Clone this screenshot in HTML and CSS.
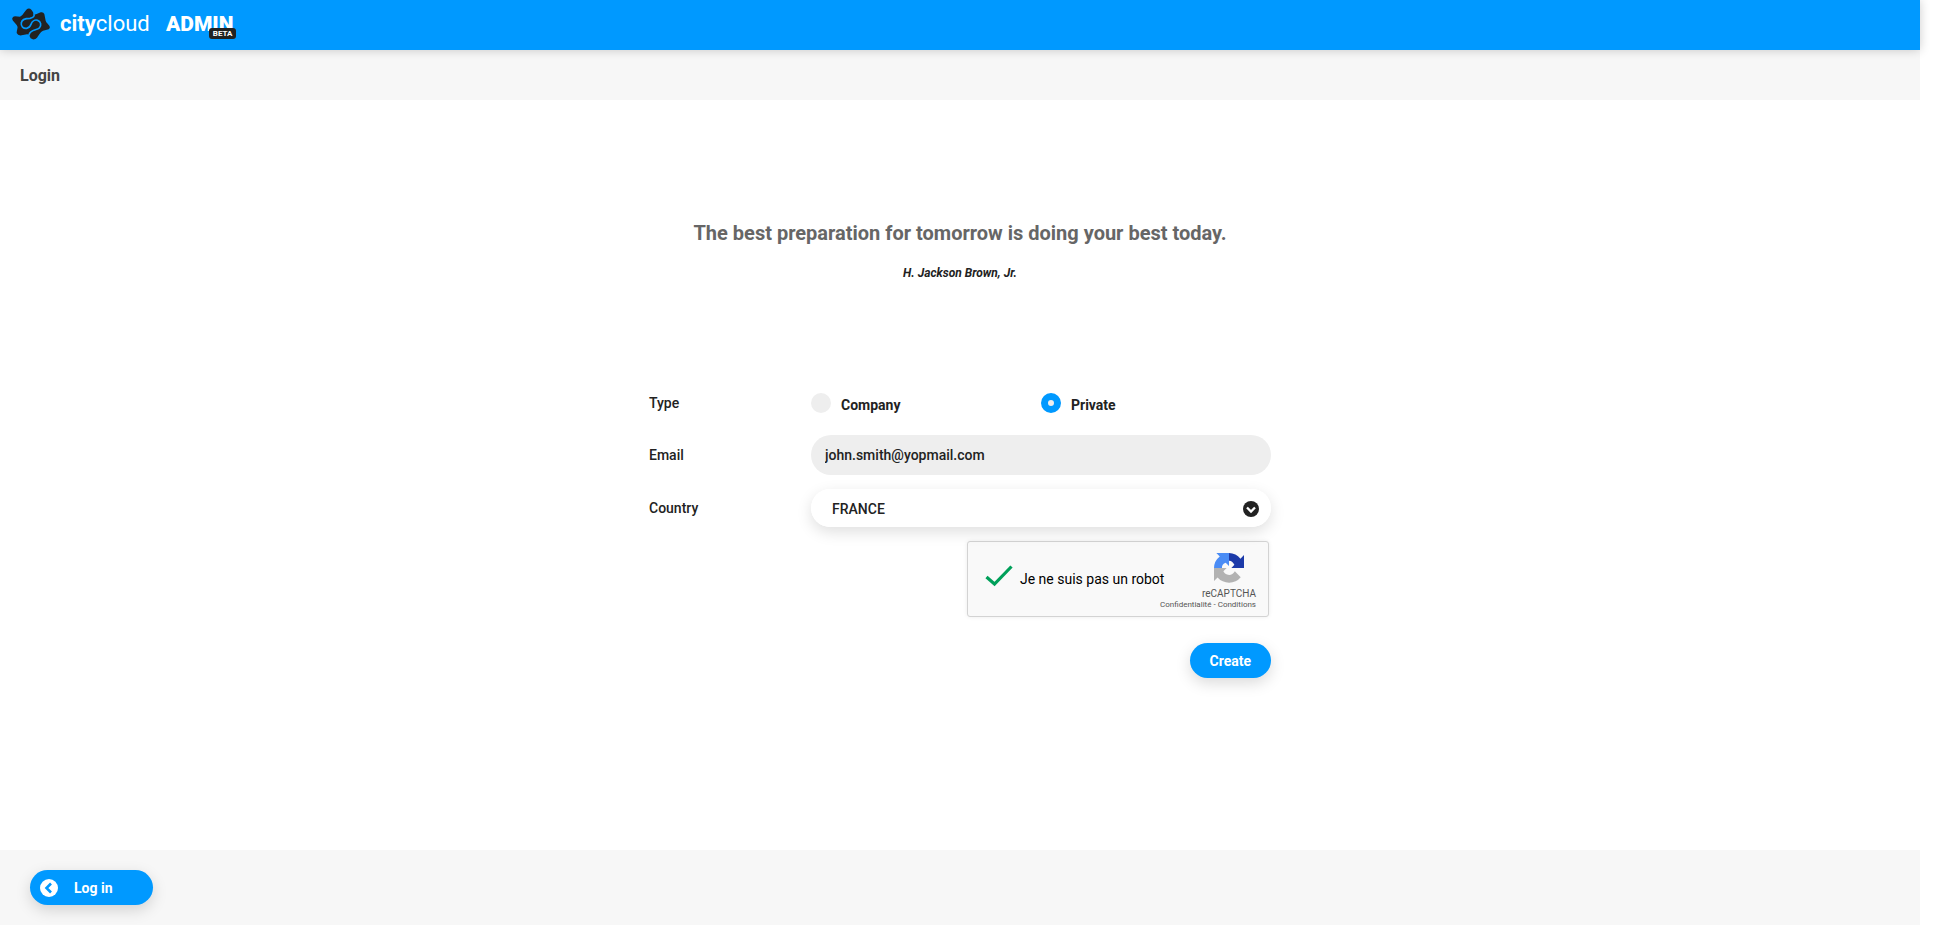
FILE: index.html
```html
<!DOCTYPE html>
<html lang="en">
<head>
<meta charset="utf-8">
<title>citycloud ADMIN</title>
<link rel="stylesheet" href="styles.css">
</head>
<body>
<div class="page">
  <header class="header">
    <svg class="logo" viewBox="0 0 114 94" aria-hidden="true">
      <path fill="#222" d="M1 29Q3 24 9 24L24 25Q31 23 37 12L43 4Q51-3 58 4Q63 10 65 16Q68 20 74 17L86 12Q94 10 97 17L101 37Q102 42 107 46L112 52Q116 59 110 63L93 67Q87 69 82 78L75 88Q70 94 62 93Q54 91 53 84Q51 77 45 78L29 81Q18 83 14 74Q14 69 16 61Q18 55 14 50L3 37Q0 33 1 29Z"/>
      <path fill="none" stroke="#09f" stroke-width="5" stroke-linecap="round" d="M66 17C68 24 64 28 54 30C42 30 29 34 28 44C26 54 34 61 44 60C52 59 55 54 57 48C60 40 68 33 77 36C87 39 89 51 82 59C75 67 55 62 51 80"/>
    </svg>
    <div class="brand"><b>city</b><span>cloud</span></div>
    <div class="admin">ADMIN<span class="beta">BETA</span></div>
  </header>
  <div class="subbar"><h1>Login</h1></div>
  <main class="main">
    <h2 class="quote">The best preparation for tomorrow is doing your best today.</h2>
    <p class="author">H. Jackson Brown, Jr.</p>
    <form class="form">
      <div class="row row-type" role="radiogroup" aria-labelledby="type-label">
        <span class="label" id="type-label">Type</span>
        <div class="options">
          <label class="option"><input type="radio" name="type"><span>Company</span></label>
          <label class="option"><input type="radio" name="type" checked><span>Private</span></label>
        </div>
      </div>
      <div class="row row-email">
        <label class="label" for="email">Email</label>
        <input class="email" id="email" type="email" value="john.smith@yopmail.com">
      </div>
      <div class="row row-country">
        <label class="label" for="country">Country</label>
        <div class="select-box">
          <select id="country"><option>FRANCE</option></select>
          <svg class="chevron" viewBox="0 0 16 16" aria-hidden="true"><circle cx="8" cy="8" r="8" fill="#222"/><path d="M4 6.500L8 10.500L12 6.500" fill="none" stroke="#fff" stroke-width="2.300"/></svg>
        </div>
      </div>
      <div class="captcha">
        <svg class="check" viewBox="0 0 28 22" aria-hidden="true"><path d="M1.500 12L9.500 19L26.500 1.500" fill="none" stroke="#00a05a" stroke-width="3.200"/></svg>
        <span class="robot">Je ne suis pas un robot</span>
        <div class="captcha-brand">
          <svg class="recaptcha" viewBox="0 0 64 64" aria-hidden="true">
            <path fill="#1c3aa9" d="M64 32V4.500L56.400 12.100A32 32 0 0 0 32 0V16.500C36 16 40 18.500 43.500 25L37 32Z"/>
            <path fill="#4a8cf5" d="M32 0H5L12.300 7.500A32 32 0 0 0 0 32H17C16.500 27 19.500 23 25 21L32 27.500Z"/>
            <path fill="#b2b2b2" d="M0 32V59.500L7.600 52A32 32 0 0 0 57 51.500L44.500 39C41 45 34 49 28 46C24 44.500 21.500 42 20 39L27 32Z"/>
          </svg>
          <span class="captcha-name">reCAPTCHA</span>
          <span class="captcha-links"><a href="#">Confidentialité</a> - <a href="#">Conditions</a></span>
        </div>
      </div>
      <button class="button create" type="submit">Create</button>
    </form>
  </main>
  <footer class="footer">
    <button class="button back" type="button">
      <svg viewBox="0 0 18 18" aria-hidden="true"><circle cx="9" cy="9" r="9" fill="#fff"/><path d="M11 4.500L6.500 9L11 13.500" fill="none" stroke="#09f" stroke-width="2.600"/></svg>
      <span>Log in</span>
    </button>
  </footer>
</div>
</body>
</html>
```
FILE: styles.css
```css
* { box-sizing: border-box; }
body {
  margin: 0;
  background: #fff;
  color: #222;
  font-family: Roboto, "Liberation Sans", sans-serif;
  font-size: 14px;
  line-height: 20px;
}
.page {
  display: flex;
  flex-direction: column;
  min-height: 100vh;
  margin-right: 13px;
}
.header {
  display: flex;
  align-items: center;
  height: 50px;
  padding: 0 12px;
  background: #09f;
  color: #fff;
  box-shadow: 0 0 10px rgba(0, 0, 0, 0.2);
  z-index: 1;
}
.logo { width: 38px; height: 32px; margin-top: -3px; }
.brand {
  margin: -3px 0 0 10px;
  width: 92px;
  font-size: 22px;
}
.admin {
  position: relative;
  margin: -3px 0 0 14px;
  font-size: 21px;
  font-weight: 900;
}
.beta {
  position: absolute;
  top: 14px;
  right: -3px;
  padding: 0 4px;
  border-radius: 3px;
  background: #222;
  font-size: 8px;
  font-weight: 700;
  line-height: 11px;
}
.subbar {
  display: flex;
  align-items: center;
  height: 50px;
  padding: 2px 20px 0;
  background: #f7f7f7;
}
.subbar h1 { margin: 0; font-size: 16px; font-weight: 700; color: #444; }
.main { flex: 1; padding-top: 118px; text-align: center; }
.quote { margin: 0; font-size: 20px; line-height: 30px; font-weight: 700; color: #666; }
.author { margin: 15px 0 0; font-size: 12px; font-weight: 700; font-style: italic; }
.form {
  display: flex;
  flex-direction: column;
  width: 622px;
  max-width: 100%;
  margin: 110px auto 0;
  text-align: left;
}
.row { display: grid; grid-template-columns: 162px 1fr; align-items: center; }
.label { font-weight: 500; }
.row-type { height: 20px; }
.options { display: grid; grid-template-columns: 1fr 1fr; }
.option { display: flex; gap: 10px; font-weight: 700; }
.option span { padding-top: 2px; line-height: 20px; height: 20px; }
.option input {
  appearance: none;
  width: 20px;
  height: 20px;
  margin: 0;
  border-radius: 50%;
  background: #eee;
}
.option input:checked { border: 7px solid #09f; }
.row-email { margin-top: 22px; }
.email {
  width: 100%;
  height: 40px;
  padding: 0 14px;
  border: 0;
  border-radius: 20px;
  background: #eee;
  color: #222;
  font: 500 14px/20px Roboto, sans-serif;
}
.row-country { margin-top: 14px; }
.select-box {
  position: relative;
  height: 38px;
  border-radius: 19px;
  box-shadow: 0 5px 15px rgba(0, 0, 0, 0.13);
}
.select-box select {
  appearance: none;
  width: 100%;
  height: 38px;
  padding: 2px 40px 0 21px;
  border: 0;
  border-radius: 19px;
  background: #fff;
  color: #222;
  font: 500 14px/20px Roboto, sans-serif;
}
.chevron { position: absolute; top: 12px; right: 12px; width: 16px; height: 16px; pointer-events: none; }
.captcha {
  display: flex;
  align-self: flex-end;
  width: 302px;
  height: 76px;
  margin: 14px 2px 0 0;
  padding: 0 12px 0 17px;
  border: 1px solid #d3d3d3;
  border-radius: 3px;
  background: #f9f9f9;
  color: #000;
  box-shadow: 0 0 4px rgba(0, 0, 0, 0.08);
}
.check { width: 28px; height: 22px; margin-top: 23px; }
.robot { margin: 27px 0 0 7px; white-space: nowrap; }
.captcha-brand {
  display: flex;
  flex: 1;
  flex-direction: column;
  align-items: flex-end;
  width: 0;
  padding-top: 11px;
  color: #555;
}
.recaptcha { width: 30px; height: 30px; margin-right: 12px; }
.captcha-name { margin-top: 5px; font-size: 10px; line-height: 12px; }
.captcha-links { font-size: 8px; line-height: 10px; white-space: nowrap; }
.captcha-links a { color: inherit; text-decoration: none; }
.button {
  height: 35px;
  border: 0;
  border-radius: 18px;
  background: #09f;
  color: #fff;
  font: 700 14px/20px Roboto, sans-serif;
  box-shadow: 0 5px 15px rgba(0, 0, 0, 0.15);
}
.create { align-self: flex-end; margin-top: 26px; padding: 0 20px 0 19px; }
.footer { padding: 20px 30px; background: #f7f7f7; }
.back { display: flex; align-items: center; gap: 16px; padding: 0 40px 0 10px; }
.back svg { width: 18px; height: 18px; }
```
